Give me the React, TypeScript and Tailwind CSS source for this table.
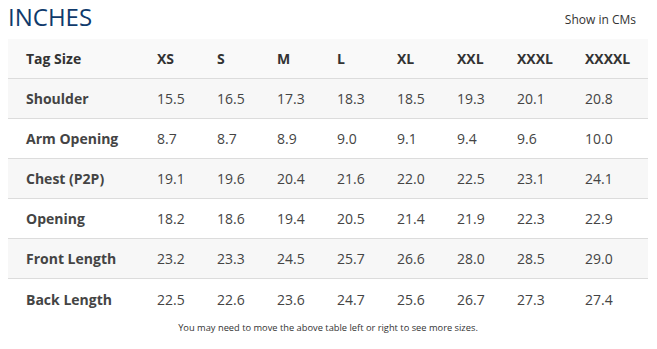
const sizes = ['XS', 'S', 'M', 'L', 'XL', 'XXL', 'XXXL', 'XXXXL'];

const rows: { label: string; values: string[] }[] = [
  { label: 'Shoulder', values: ['15.5', '16.5', '17.3', '18.3', '18.5', '19.3', '20.1', '20.8'] },
  { label: 'Arm Opening', values: ['8.7', '8.7', '8.9', '9.0', '9.1', '9.4', '9.6', '10.0'] },
  { label: 'Chest (P2P)', values: ['19.1', '19.6', '20.4', '21.6', '22.0', '22.5', '23.1', '24.1'] },
  { label: 'Opening', values: ['18.2', '18.6', '19.4', '20.5', '21.4', '21.9', '22.3', '22.9'] },
  { label: 'Front Length', values: ['23.2', '23.3', '24.5', '25.7', '26.6', '28.0', '28.5', '29.0'] },
  { label: 'Back Length', values: ['22.5', '22.6', '23.6', '24.7', '25.6', '26.7', '27.3', '27.4'] },
];

const cols = 'grid grid-cols-[149px_60px_60px_60px_60px_60px_60px_68px_63px]';

export default function App() {
  return (
    <div className="w-[657px] h-[349px] bg-white font-['Open_Sans',sans-serif] overflow-hidden">
      {/* Title bar */}
      <div className="flex justify-between items-start pl-[8px] pr-[21px] h-[39px]">
        <h1 className="mt-[2px] text-[24px] leading-[30px] text-[#0f3a6c] font-normal">INCHES</h1>
        <button className="mt-[12px] text-[12px] leading-[16px] text-[#333]">Show in CMs</button>
      </div>

      {/* Size table */}
      <div className="mx-[8px] w-[640px]">
        <div className={`${cols} h-[40px] items-center bg-[#f9f9f9] border-b border-[#dcdcdc] text-[14px] font-bold text-[#333]`}>
          <div className="pl-[18px]">Tag Size</div>
          {sizes.map((s) => (
            <div key={s}>{s}</div>
          ))}
        </div>

        {rows.map((row, i) => (
          <div
            key={row.label}
            className={`${cols} h-[40px] items-center text-[14px] text-[#444]
              ${i % 2 === 0 ? 'bg-[#f7f7f7]' : 'bg-white'}
              ${i < rows.length - 1 ? 'border-b border-[#dcdcdc]' : ''}`}
          >
            <div className="pl-[18px] font-bold">{row.label}</div>
            {row.values.map((v, j) => (
              <div key={j}>{v}</div>
            ))}
          </div>
        ))}
      </div>

      <p className="mt-[2px] w-[656px] text-center text-[9.3px] leading-[14px] text-[#333]">
        You may need to move the above table left or right to see more sizes.
      </p>
    </div>
  );
}
